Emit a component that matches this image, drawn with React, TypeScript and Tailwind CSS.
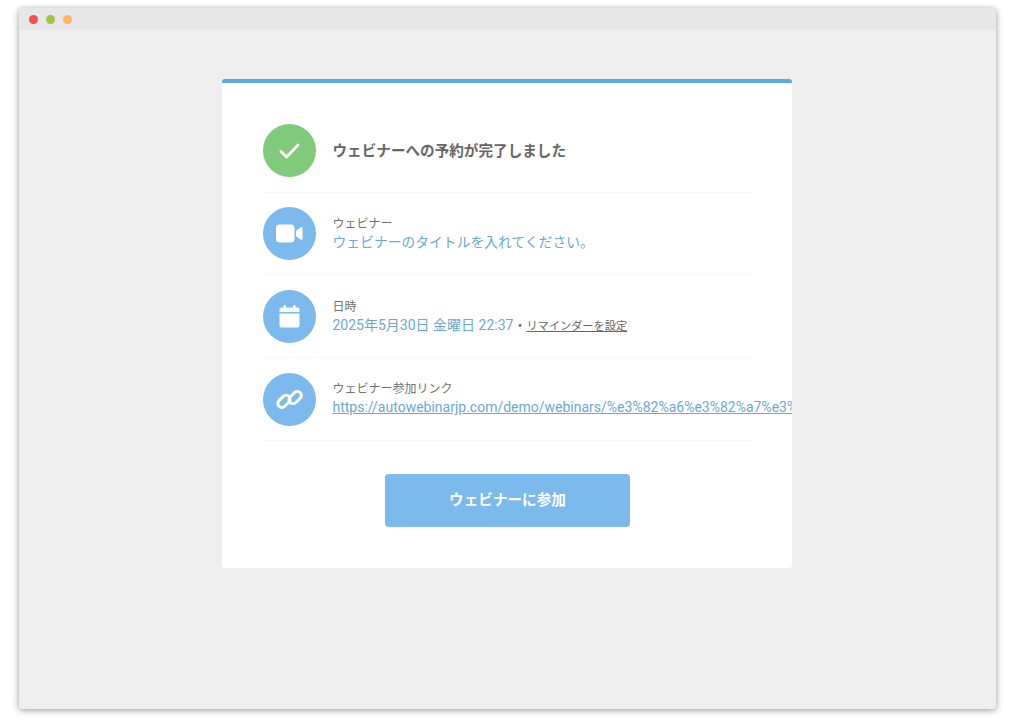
import type { ReactNode } from 'react'

const fontStack = 'font-["Roboto","Noto_Sans_CJK_JP",sans-serif]'

function IconCircle({ children, green }: { children: ReactNode; green?: boolean }) {
  return (
    <div
      className={`flex h-[53px] w-[53px] shrink-0 items-center justify-center rounded-full text-white ${
        green ? 'bg-[#80cb7b]' : 'bg-[#7cb9ec]'
      }`}
    >
      {children}
    </div>
  )
}

function CheckIcon() {
  return (
    <svg width="21" height="16" viewBox="0 0 21 16" fill="none" stroke="currentColor" strokeWidth="2.8" strokeLinecap="round" strokeLinejoin="round">
      <path d="M2 8.5 L7.5 14 L19 2" />
    </svg>
  )
}

function VideoIcon() {
  return (
    <svg width="27" height="19" viewBox="0 0 27 19" fill="currentColor">
      <rect x="0" y="0.5" width="18.5" height="18" rx="3.5" />
      <path d="M20 6.8 L25 3.2 Q26.5 2.4 26.5 4 L26.5 15 Q26.5 16.6 25 15.8 L20 12.2 Z" />
    </svg>
  )
}

function CalendarIcon() {
  return (
    <svg width="21" height="23" viewBox="0 0 21 23" fill="currentColor">
      <rect x="4.5" y="0" width="2.4" height="5" rx="1" />
      <rect x="14.1" y="0" width="2.4" height="5" rx="1" />
      <path d="M2.5 2.5 H18.5 Q20.5 2.5 20.5 4.5 V7 H0.5 V4.5 Q0.5 2.5 2.5 2.5 Z" />
      <path d="M0.5 8.5 H20.5 V20.5 Q20.5 22.5 18.5 22.5 H2.5 Q0.5 22.5 0.5 20.5 Z" />
    </svg>
  )
}

function LinkIcon() {
  return (
    <svg width="28" height="28" viewBox="0 0 28 28" fill="none" stroke="currentColor" strokeWidth="3">
      <rect x="1" y="11.3" width="14" height="8" rx="4" transform="rotate(-45 8 15.3)" />
      <rect x="12.2" y="7.5" width="14" height="8" rx="4" transform="rotate(-45 19.2 11.5)" />
    </svg>
  )
}

function InfoRow({
  icon,
  label,
  children,
  tight,
  raised,
}: {
  icon: ReactNode
  label: string
  children: ReactNode
  tight?: boolean
  raised?: boolean
}) {
  return (
    <div
      className={`flex w-[489px] items-start gap-[16.5px] border-b border-[#f8f8f8] ${
        tight ? 'h-[82px] pt-[14px]' : 'h-[83px] pt-[15px]'
      }`}
    >
      <IconCircle>{icon}</IconCircle>
      <div className={`min-w-0 ${raised ? 'pt-[7px]' : 'pt-[8px]'}`}>
        <div className="text-[12px] leading-[18px] text-[#707070]">{label}</div>
        <div className="whitespace-nowrap text-[14px] leading-[19px] text-[#6aa8d8]">{children}</div>
      </div>
    </div>
  )
}

export default function App() {
  return (
    <div className={`h-[722px] w-[1024px] overflow-hidden bg-white pl-[19px] pt-[8px] ${fontStack}`}>
      <div className="h-[701px] w-[977px] rounded-[3px] bg-[#eeeeee] shadow-[-2px_2px_6px_rgba(0,0,0,0.17),2px_2px_6px_rgba(0,0,0,0.17),0_-1px_5px_rgba(0,0,0,0.1)]">
        <div className="flex h-[22px] items-center gap-[8px] rounded-t-[3px] bg-[#e7e7e7] pl-[10px]">
          <span className="h-[9px] w-[9px] rounded-full bg-[#f2504b]" />
          <span className="h-[9px] w-[9px] rounded-full bg-[#a5c146]" />
          <span className="h-[9px] w-[9px] rounded-full bg-[#fbb85c]" />
        </div>

        <div className="flex justify-center pr-[1px] pt-[49px]">
          <div className="h-[489px] w-[570px] overflow-hidden rounded-[3px] border-t-4 border-[#55a9e9] bg-white pl-[41px] pt-[26px]">
            <div className="flex h-[84px] w-[489px] items-start gap-[16.5px] border-b border-[#f8f8f8] pt-[15px]">
              <IconCircle green>
                <CheckIcon />
              </IconCircle>
              <div className="flex h-[53px] items-center pt-[2px] text-[14.6px] font-bold text-[#666666]">
                ウェビナーへの予約が完了しました
              </div>
            </div>

            <InfoRow tight icon={<VideoIcon />} label="ウェビナー">
              <span className="text-[13.8px]">ウェビナーのタイトルを入れてください。</span>
            </InfoRow>

            <InfoRow icon={<CalendarIcon />} label="日時">
              2025年5月30日 金曜日 22:37
              <span className="text-[13px] text-[#666666]">・</span>
              <span className="text-[11.2px] text-[#666666] underline">リマインダーを設定</span>
            </InfoRow>

            <InfoRow raised icon={<LinkIcon />} label="ウェビナー参加リンク">
              <a className="underline">
                https://autowebinarjp.com/demo/webinars/%e3%82%a6%e3%82%a7%e3%83%93%e3%83%8a%e3%83%bc
              </a>
            </InfoRow>

            <div className="flex w-[489px] justify-center pt-[33px]">
              <button className="h-[53px] w-[245px] rounded-[4px] bg-[#7cb9ec] text-[14.6px] font-bold text-white">
                ウェビナーに参加
              </button>
            </div>
          </div>
        </div>
      </div>
    </div>
  )
}
